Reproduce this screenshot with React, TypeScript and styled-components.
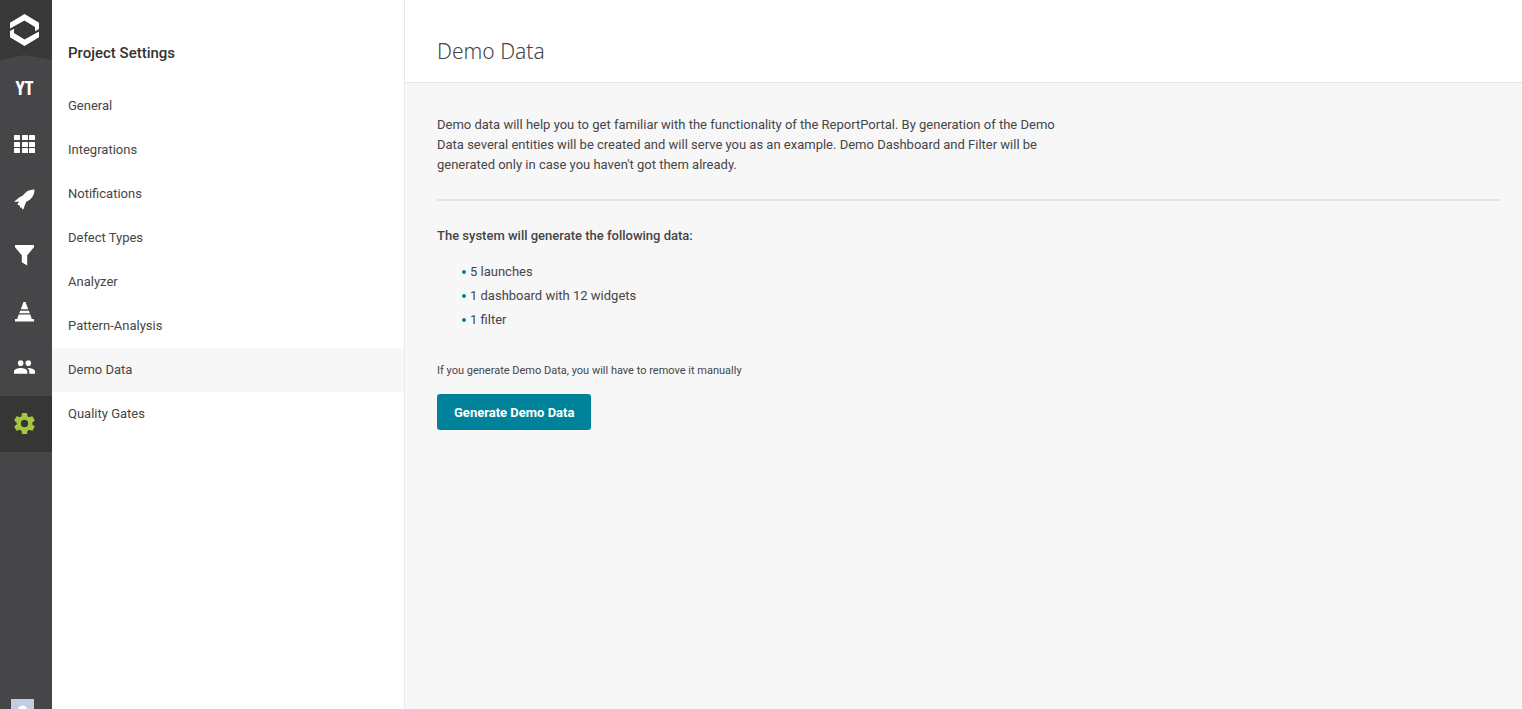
import React from "react";
import styled, { createGlobalStyle } from "styled-components";

const GlobalStyle = createGlobalStyle`
  * { box-sizing: border-box; }
  body { margin: 0; background: #ffffff; font-family: Roboto, "Liberation Sans", sans-serif; color: #464547; }
  h1, h2, h3, p, ul { margin: 0; padding: 0; font-weight: 400; }
  ul { list-style: none; }
`;

const Page = styled.div`
  display: flex;
  min-height: 100vh;
`;

const Rail = styled.nav`
  display: flex;
  flex-direction: column;
  flex: none;
  width: 52px;
  height: 100vh;
  background: #464547;
`;

const LogoLink = styled.a`
  display: flex;
  align-items: center;
  height: 60px;
  padding-left: 10px;
  background: #393839;
  clip-path: polygon(0 0, 100% 0, 100% 100%, 46% 55px, 0 100%);
`;

const RailLink = styled.a<{ $active?: boolean }>`
  display: flex;
  align-items: center;
  justify-content: center;
  height: 56px;
  padding-right: 3px;
  color: ${(p) => (p.$active ? "#a6c63c" : "#ffffff")};
  background: ${(p) => (p.$active ? "#363636" : "transparent")};
  font-family: "Open Sans Condensed", "Roboto Condensed", "Liberation Sans Narrow", Roboto, sans-serif;
  font-size: 20px;
  line-height: 24px;
  font-weight: 700;
  text-decoration: none;
`;

const AvatarButton = styled.button`
  height: 10px;
  width: 23px;
  margin: auto 0 0 11px;
  padding: 0;
  border: 0;
  overflow: hidden;
  background: #c3cde0;
`;

const Sidebar = styled.aside`
  flex: none;
  width: 353px;
  padding-top: 42px;
  border-right: 1px solid #e9eaf0;
`;

const SidebarTitle = styled.h2`
  padding: 0 16px;
  margin-bottom: 20px;
  font-size: 15px;
  line-height: 22px;
  font-weight: 500;
  color: #333333;
`;

const MenuLink = styled.a<{ $active?: boolean }>`
  display: block;
  padding: 0 16px;
  font-size: 13px;
  line-height: 44px;
  color: #464547;
  text-decoration: none;
  background: ${(p) => (p.$active ? "#f7f7f7" : "transparent")};
`;

const Main = styled.main`
  flex: 1;
  min-width: 0;
  background: #f7f7f7;
`;

const Header = styled.header`
  display: flex;
  align-items: center;
  height: 83px;
  padding: 20px 32px 0;
  background: #ffffff;
  border-bottom: 1px solid #e5e7ed;
`;

const Title = styled.h1`
  font-family: "Noto Sans", "Open Sans", sans-serif;
  font-size: 21px;
  line-height: 28px;
  font-weight: 300;
`;

const Content = styled.section`
  padding: 32px 22px 32px 32px;
`;

const Description = styled.p`
  max-width: 640px;
  font-size: 13px;
  line-height: 20px;
`;

const Divider = styled.hr`
  height: 2px;
  margin: 24px 0 25px;
  border: 0;
  background: #e1e5eb;
`;

const Subtitle = styled.h3`
  font-size: 13px;
  line-height: 20px;
  font-weight: 500;
`;

const DataList = styled.ul`
  margin: 14px 0 31px;
  padding-left: 25px;
`;

const DataItem = styled.li`
  display: flex;
  align-items: center;
  gap: 4px;
  font-size: 13px;
  line-height: 24px;
  &::before {
    content: "";
    width: 4px;
    height: 4px;
    border-radius: 50%;
    background: #00829b;
  }
`;

const Note = styled.p`
  margin-bottom: 15px;
  font-size: 11px;
  line-height: 16px;
`;

const PrimaryButton = styled.button`
  height: 36px;
  padding: 0 17px;
  border: 0;
  border-radius: 3px;
  background: #00829b;
  color: #ffffff;
  font-family: inherit;
  font-size: 13px;
  font-weight: 700;
`;

const Logo = () => (
  <svg width="29" height="32" viewBox="0 0 29 32" fill="#fff" aria-hidden="true">
    <path d="M14.500 0 29 8.700V15L25 17.300V13L14.500 6.500 0 14.500V8.700z" />
    <path d="M14.500 32 0 23.300V17L4 14.700V19L14.500 25.500 29 17.500V23.300z" />
  </svg>
);

const GridIcon = () => (
  <svg width="21" height="18" viewBox="0 0 21 18" fill="currentColor" aria-hidden="true">
    {[0, 7, 13].flatMap((y) =>
      [0, 8, 15].map((x) => <rect key={`${x}-${y}`} x={x} y={y} width="6" height="5" rx=".6" />)
    )}
  </svg>
);

const RocketIcon = () => (
  <svg width="21" height="22" viewBox="0 0 21 22" fill="currentColor" aria-hidden="true">
    <path d="M20.400.4C15.500.2 11.500 2.400 8.600 6.800L5.500 8.200 .6 12.300l.2.700 4.200-.5-1.800 3.300 1.700.3 1 1.200.4 1.700 1.200-.8 1 2.200.9-.2 1.900-5.200 1-2.300C17.500 10.500 20.900 5.500 20.400.4z" />
  </svg>
);

const FilterIcon = () => (
  <svg width="20" height="22" viewBox="0 0 20 22" fill="currentColor" aria-hidden="true">
    <path d="M0 0h19v2.200L12.200 10.200V20.500L6.800 17.200v-7L0 2.200z" />
  </svg>
);

const ConeIcon = () => (
  <svg width="20" height="20" viewBox="0 0 20 20" fill="currentColor" aria-hidden="true">
    <path d="M8.500 0h2l2.700 7.300H5.800zM5.200 8.700h8.600l1 2.500H4.200zM3.700 12.500h11.600l1.500 4.500H19v2.500H0V17h2.200z" />
  </svg>
);

const PeopleIcon = () => (
  <svg width="21" height="16" viewBox="1 5 22 16" fill="currentColor" aria-hidden="true">
    <path d="M16 11c1.660 0 2.990-1.340 2.990-3S17.660 5 16 5s-3 1.340-3 3 1.340 3 3 3zm-8 0c1.660 0 2.990-1.340 2.990-3S9.660 5 8 5 5 6.340 5 8s1.340 3 3 3zm0 2c-2.330 0-7 1.170-7 3.500V19h14v-2.500C15 14.170 10.330 13 8 13zm8 0c-.29 0-.62.020-.97.050C16.190 13.890 17 15.020 17 16.500V19h6v-2.500c0-2.330-4.670-3.500-7-3.500z" />
  </svg>
);

const GearIcon = () => (
  <svg width="21" height="22" viewBox="2 2 20 21" fill="currentColor" aria-hidden="true">
    <path d="M19.430 12.980c.04-.32.070-.64.070-.98s-.03-.66-.07-.98l2.110-1.650c.19-.15.24-.42.12-.64l-2-3.460c-.12-.22-.39-.3-.61-.22l-2.490 1c-.52-.4-1.080-.73-1.690-.98l-.38-2.650C14.460 2.180 14.250 2 14 2h-4c-.25 0-.46.18-.49.42l-.38 2.650c-.61.25-1.170.59-1.690.98l-2.490-1c-.23-.09-.49 0-.61.22l-2 3.460c-.13.22-.07.49.12.64l2.110 1.650c-.04.32-.07.65-.07.98s.03.66.07.98l-2.110 1.650c-.19.15-.24.42-.12.64l2 3.460c.12.22.39.3.61.22l2.490-1c.52.4 1.080.73 1.690.98l.38 2.650c.03.24.24.42.49.42h4c.25 0 .46-.18.49-.42l.38-2.650c.61-.25 1.170-.59 1.690-.98l2.490 1c.23.09.49 0 .61-.22l2-3.460c.12-.22.070-.49-.12-.64zM12 15.500A3.500 3.500 0 1 1 12 8.500a3.500 3.500 0 0 1 0 7z" />
  </svg>
);

const AvatarIcon = () => (
  <svg width="23" height="23" viewBox="0 0 23 23" fill="#fff" aria-hidden="true" display="block">
    <circle cx="11.500" cy="11" r="4.500" />
    <path d="M3 23c0-5 4-7 8.500-7s8.500 2 8.500 7z" />
  </svg>
);

const railItems = [
  { label: "Dashboards", icon: <GridIcon /> },
  { label: "Launches", icon: <RocketIcon /> },
  { label: "Filters", icon: <FilterIcon /> },
  { label: "Debug", icon: <ConeIcon /> },
  { label: "Members", icon: <PeopleIcon /> },
  { label: "Settings", icon: <GearIcon />, active: true },
];

const menuItems = [
  "General",
  "Integrations",
  "Notifications",
  "Defect Types",
  "Analyzer",
  "Pattern-Analysis",
  "Demo Data",
  "Quality Gates",
];

const dataItems = ["5 launches", "1 dashboard with 12 widgets", "1 filter"];

export default function App() {
  return (
    <>
      <GlobalStyle />
      <Page>
        <Rail aria-label="Main">
          <LogoLink href="#" aria-label="ReportPortal"><Logo /></LogoLink>
          <RailLink href="#">YT</RailLink>
          {railItems.map((item) => (
            <RailLink key={item.label} href="#" aria-label={item.label} $active={item.active}>
              {item.icon}
            </RailLink>
          ))}
          <AvatarButton type="button" aria-label="User menu"><AvatarIcon /></AvatarButton>
        </Rail>
        <Sidebar>
          <SidebarTitle>Project Settings</SidebarTitle>
          <ul>
            {menuItems.map((item) => (
              <li key={item}>
                <MenuLink href="#" $active={item === "Demo Data"}>{item}</MenuLink>
              </li>
            ))}
          </ul>
        </Sidebar>
        <Main>
          <Header><Title>Demo Data</Title></Header>
          <Content>
            <Description>
              Demo data will help you to get familiar with the functionality of the ReportPortal. By
              generation of the Demo Data several entities will be created and will serve you as an
              example. Demo Dashboard and Filter will be generated only in case you haven't got them
              already.
            </Description>
            <Divider />
            <Subtitle>The system will generate the following data:</Subtitle>
            <DataList>
              {dataItems.map((item) => <DataItem key={item}>{item}</DataItem>)}
            </DataList>
            <Note>If you generate Demo Data, you will have to remove it manually</Note>
            <PrimaryButton type="button">Generate Demo Data</PrimaryButton>
          </Content>
        </Main>
      </Page>
    </>
  );
}
